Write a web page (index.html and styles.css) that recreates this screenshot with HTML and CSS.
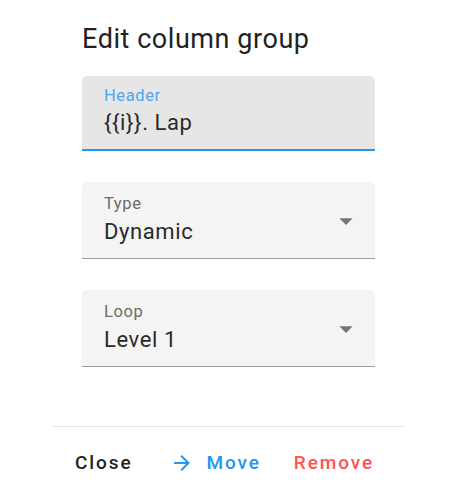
FILE: index.html
```html
<!DOCTYPE html>
<html>
<head>
<meta charset="utf-8">
<link rel="stylesheet" href="styles.css">
</head>
<body>
<div class="card">
  <div class="title">Edit column group</div>
  <div class="fields">
    <div class="field focused">
      <div class="content">
        <div class="label">Header</div>
        <div class="value">{{i}}. Lap</div>
      </div>
    </div>
    <div class="field select">
      <div class="content">
        <div class="label">Type</div>
        <div class="value">Dynamic</div>
      </div>
      <svg class="caret" viewBox="0 0 24 24" width="32" height="32"><path d="M7 10l5 5 5-5z" fill="#757575"/></svg>
    </div>
    <div class="field select">
      <div class="content">
        <div class="label">Loop</div>
        <div class="value">Level 1</div>
      </div>
      <svg class="caret" viewBox="0 0 24 24" width="32" height="32"><path d="M7 10l5 5 5-5z" fill="#757575"/></svg>
    </div>
  </div>
  <div class="actions">
    <span class="btn close">Close</span>
    <span class="btn move"><svg class="arrow" viewBox="0 0 24 24" width="24" height="24"><path d="M4 11v2h12l-5.5 5.5 1.42 1.42L19.84 12l-7.92-7.92L10.5 5.5 16 11H4z" fill="#2196f3"/></svg>Move</span>
    <span class="btn remove">Remove</span>
  </div>
</div>
</body>
</html>
```
FILE: styles.css
```css
html, body {
  margin: 0;
  padding: 0;
  background: #ffffff;
}
body {
  font-family: Roboto, "Liberation Sans", Arial, sans-serif;
  color: #212121;
}
.card {
  margin-left: 52px;
  width: 353px;
  padding-top: 23px;
}
.title {
  padding: 0 30px;
  font-size: 27px;
  letter-spacing: 0.55px;
  line-height: 32px;
  color: #222;
}
.fields {
  padding: 0 30px;
  margin-top: 21px;
}
.field {
  display: flex;
  background: #f4f4f4;
  border-radius: 5px 5px 0 0;
  height: 77px;
  box-sizing: border-box;
  border-bottom: 1px solid #9e9e9e;
  padding-left: 22px;
  margin-bottom: 31px;
}
.field.focused {
  height: 75px;
  background: #e6e6e6;
  border-bottom: 2px solid #2196f3;
}
.content {
  flex: 1;
  padding-top: 12px;
}
.focused .content {
  padding-top: 10px;
}
.label {
  font-size: 16.5px;
  letter-spacing: 0.6px;
  line-height: 20px;
  color: #6b6b6b;
}
.focused .label {
  color: #4ea7f2;
}
.value {
  margin-top: 5px;
  font-size: 22px;
  letter-spacing: 0.6px;
  line-height: 26px;
  color: #2a2a2a;
}
.focused .value {
  margin-top: 4px;
}
.caret {
  margin: 23px 13px 0 0;
}
.fields .field:last-child {
  margin-bottom: 0;
}
.actions {
  margin-top: 59px;
  border-top: 1px solid #e6e6e6;
  padding-top: 24px;
  display: flex;
  align-items: center;
}
.btn {
  display: inline-flex;
  align-items: center;
  font-size: 19px;
  font-weight: 500;
  letter-spacing: 0.1em;
  line-height: 22px;
}
.close {
  margin-left: 23px;
  color: #222;
}
.move {
  margin-left: 42px;
  color: #2196f3;
}
.arrow {
  margin: 0 12px 0 -4px;
}
.remove {
  margin-left: 33px;
  color: #ff5252;
}
```
